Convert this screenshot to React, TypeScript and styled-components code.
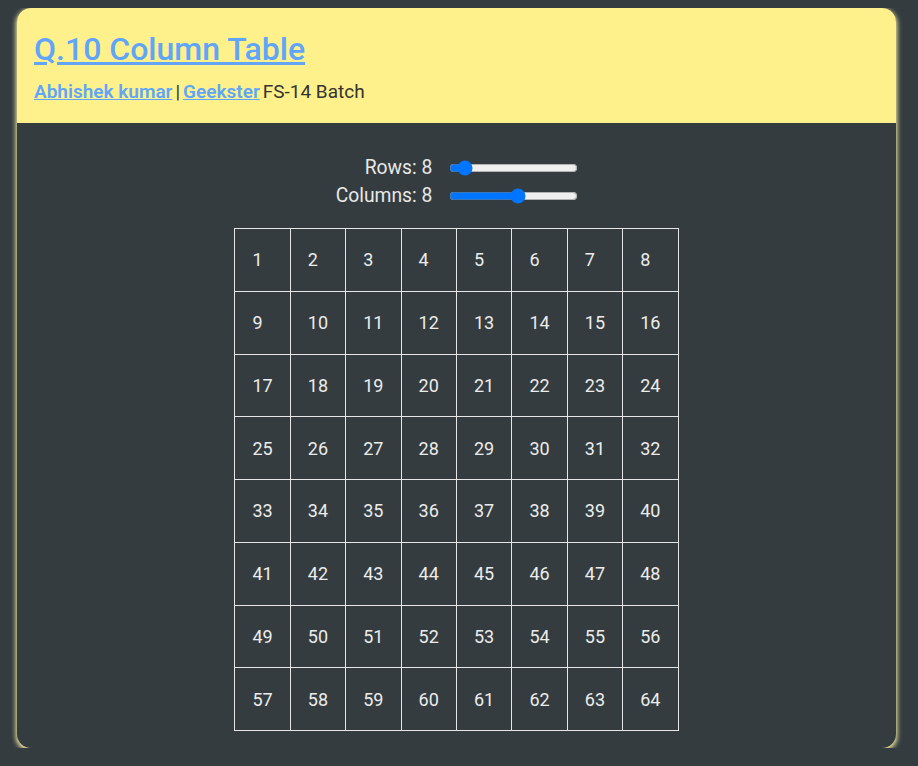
import React, { useState } from "react";
import styled, { createGlobalStyle } from "styled-components";

const GlobalStyle = createGlobalStyle`
  body {
    margin: 8px;
    background: #343c3f;
    font-family: Roboto, "Liberation Sans", sans-serif;
  }
`;

const App = () => {
  const [rows, setRows] = useState(8);
  const [columns, setColumns] = useState(8);

  const grid = Array.from({ length: rows }, (_, r) =>
    Array.from({ length: columns }, (_, c) => r * columns + c + 1)
  );

  return (
    <>
      <GlobalStyle />
      <StyledCard>
        <StyledHeader>
          <StyledTitle href="#">Q.10 Column Table</StyledTitle>
          <StyledByline>
            <StyledLink href="#">Abhishek kumar</StyledLink>
            <StyledPipe>|</StyledPipe>
            <StyledLink href="#">Geekster</StyledLink>
            <span>FS-14 Batch</span>
          </StyledByline>
        </StyledHeader>
        <StyledBody>
          <StyledControls>
            <StyledLabel htmlFor="rows">Rows: {rows}</StyledLabel>
            <StyledRange
              id="rows"
              type="range"
              min={1}
              max={100}
              value={rows}
              onChange={(e) => setRows(Number(e.target.value))}
            />
            <StyledLabel htmlFor="columns">Columns: {columns}</StyledLabel>
            <StyledRange
              id="columns"
              type="range"
              min={1}
              max={14}
              value={columns}
              onChange={(e) => setColumns(Number(e.target.value))}
            />
          </StyledControls>
          <StyledTable>
            <tbody>
              {grid.map((row, i) => (
                <tr key={i}>
                  {row.map((n) => (
                    <StyledCell key={n}>{n}</StyledCell>
                  ))}
                </tr>
              ))}
            </tbody>
          </StyledTable>
        </StyledBody>
      </StyledCard>
    </>
  );
};

const StyledCard = styled.div`
  width: 879px;
  margin: 0 0 0 9px;
  border-radius: 14px;
  overflow: hidden;
  background: #343c3f;
  box-shadow: 0 2px 5px 1px #fef3a8;
`;

const StyledHeader = styled.header`
  background: #fef08a;
  padding: 22px 17px 20px;
  height: 115px;
  box-sizing: border-box;
`;

const StyledTitle = styled.a`
  display: block;
  width: max-content;
  font-size: 32px;
  font-weight: 500;
  color: #60a5fa;
  line-height: 38px;
  margin-bottom: 13px;
`;

const StyledByline = styled.div`
  font-size: 19px;
  color: #333;
  line-height: 22px;
`;

const StyledLink = styled.a`
  color: #60a5fa;
  font-weight: 600;
  margin-right: 3px;
`;

const StyledPipe = styled.span`
  margin-right: 3px;
`;

const StyledBody = styled.div`
  display: flex;
  flex-direction: column;
  align-items: center;
  padding: 34px 0 17px;
`;

const StyledControls = styled.div`
  display: grid;
  grid-template-columns: auto auto;
  column-gap: 15px;
  row-gap: 6px;
  align-items: center;
  margin: 0 0 21px 3px;
`;

const StyledLabel = styled.label`
  justify-self: end;
  color: #e8e8e8;
  font-size: 19.3px;
  line-height: 22px;
`;

const StyledRange = styled.input`
  width: 129px;
  margin: 0 2px;
`;

const StyledTable = styled.table`
  border-collapse: collapse;
  border: 1px solid #e6e6e6;
`;

const StyledCell = styled.td`
  border: 1px solid #e6e6e6;
  color: #ececec;
  font-size: 18px;
  box-sizing: border-box;
  width: 55.4px;
  height: 62.75px;
  padding: 0 0 0 17px;
  text-align: left;
`;

export default App;
